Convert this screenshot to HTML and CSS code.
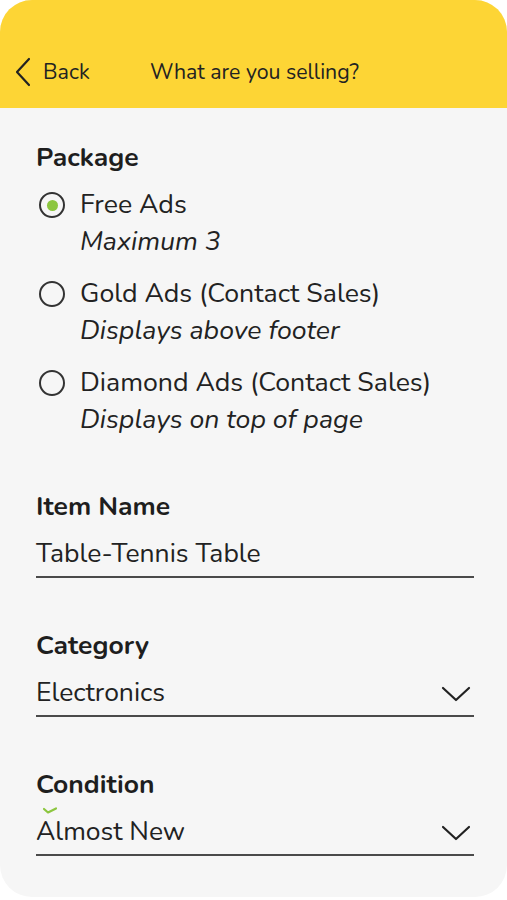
FILE: index.html
```html
<!DOCTYPE html>
<html lang="en">
<head>
<meta charset="utf-8">
<title>What are you selling?</title>
<link rel="stylesheet" href="styles.css">
</head>
<body>
<div class="screen">
  <header class="topbar">
    <a class="back">
      <svg class="back-icon" width="18" height="30" viewBox="0 0 18 30"><path d="M15 2 L3 15 L15 28" fill="none" stroke="#222" stroke-width="2.2" stroke-linecap="round" stroke-linejoin="round"/></svg>
      <span>Back</span>
    </a>
    <h1 class="title">What are you selling?</h1>
  </header>
  <main class="content">
    <section class="package">
      <h2 class="label">Package</h2>
      <div class="options">
        <div class="option">
          <span class="radio checked"></span>
          <div class="option-text">
            <div class="opt-title">Free Ads</div>
            <div class="opt-sub">Maximum 3</div>
          </div>
        </div>
        <div class="option">
          <span class="radio"></span>
          <div class="option-text">
            <div class="opt-title">Gold Ads (Contact Sales)</div>
            <div class="opt-sub">Displays above footer</div>
          </div>
        </div>
        <div class="option">
          <span class="radio"></span>
          <div class="option-text">
            <div class="opt-title">Diamond Ads (Contact Sales)</div>
            <div class="opt-sub">Displays on top of page</div>
          </div>
        </div>
      </div>
    </section>
    <section class="field">
      <h2 class="label">Item Name</h2>
      <div class="input"><span>Table-Tennis Table</span></div>
    </section>
    <section class="field">
      <h2 class="label">Category</h2>
      <div class="input select"><span>Electronics</span>
        <svg class="chev" width="30" height="18" viewBox="0 0 30 18"><path d="M2 3 L15 15 L28 3" fill="none" stroke="#222" stroke-width="2.2" stroke-linecap="round" stroke-linejoin="round"/></svg>
      </div>
    </section>
    <section class="field">
      <h2 class="label">Condition</h2>
      <div class="input select with-tick">
        <svg class="tick" width="16" height="8" viewBox="0 0 16 8"><path d="M2 2 L6 5.5 L14 1.5" fill="none" stroke="#8cc63f" stroke-width="2.2" stroke-linecap="round" stroke-linejoin="round"/></svg>
        <span>Almost New</span>
        <svg class="chev" width="30" height="18" viewBox="0 0 30 18"><path d="M2 3 L15 15 L28 3" fill="none" stroke="#222" stroke-width="2.2" stroke-linecap="round" stroke-linejoin="round"/></svg>
      </div>
    </section>
  </main>
</div>
</body>
</html>
```
FILE: styles.css
```css
html, body {
  margin: 0;
  padding: 0;
  background: #ffffff;
}
body {
  font-family: "Nunito", "Lato", "Noto Sans", sans-serif;
  color: #222;
}
.screen {
  width: 507px;
  height: 897px;
  background: #f6f6f6;
  border-radius: 32px;
  overflow: hidden;
}
.topbar {
  height: 108px;
  background: #fdd535;
  display: flex;
  align-items: flex-end;
  padding: 0 0 21px 14px;
  box-sizing: border-box;
}
.back {
  display: flex;
  align-items: center;
  gap: 11px;
  font-size: 21.5px;
  color: #222;
  width: 136px;
  height: 30px;
}
.back-icon { display: block; }
.title {
  margin: 0;
  font-size: 21.3px;
  font-weight: 400;
  line-height: 30px;
  color: #222;
}
.content {
  padding: 34px 33px 0 36px;
}
.label {
  margin: 0;
  font-size: 26.5px;
  font-weight: 700;
  line-height: 30px;
  color: #1e1e1e;
}
.options {
  margin-top: 14px;
  display: flex;
  flex-direction: column;
  gap: 15px;
}
.option {
  display: flex;
  align-items: flex-start;
}
.radio {
  width: 26px;
  height: 26px;
  box-sizing: border-box;
  border: 2px solid #333;
  border-radius: 50%;
  margin: 6px 15px 0 3px;
  display: flex;
  align-items: center;
  justify-content: center;
  flex: none;
}
.radio.checked::after {
  content: "";
  width: 11px;
  height: 11px;
  border-radius: 50%;
  background: #8cc63f;
}
.opt-title, .opt-sub {
  font-size: 26.7px;
  line-height: 37px;
  color: #222;
}
.opt-sub { font-style: italic; }
.field { margin-top: 52px; }
.package + .field { margin-top: 53px; }
.input {
  margin-top: 14px;
  border-bottom: 2px solid #4a4a4a;
  height: 43px;
  box-sizing: border-box;
  display: flex;
  align-items: flex-start;
  justify-content: space-between;
  font-size: 26.5px;
  line-height: 36px;
  color: #222;
  position: relative;
}
.chev { margin: 11px 3px 0 0; display: block; }
.tick {
  position: absolute;
  left: 6px;
  top: -6px;
}
```
